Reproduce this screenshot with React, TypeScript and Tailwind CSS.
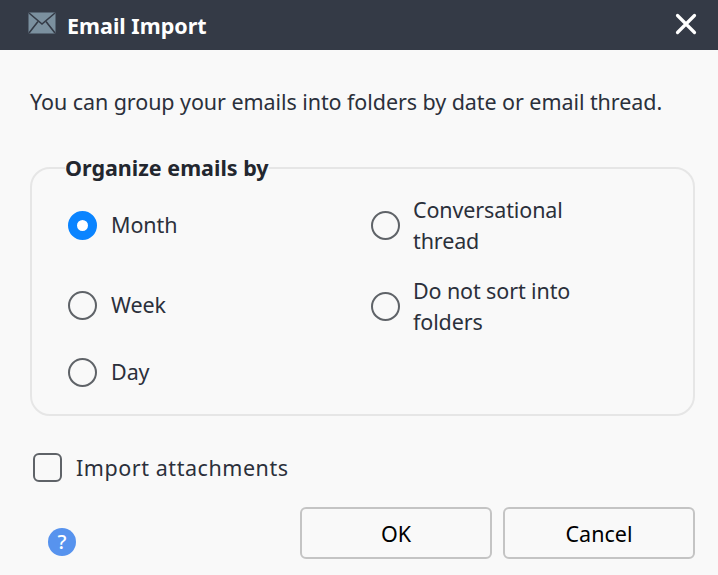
import React from "react";

function Radio({ label, checked, lift }: { label: React.ReactNode; checked?: boolean; lift?: boolean }) {
  return (
    <div className="flex items-center">
      {checked ? (
        <span className="w-[29px] h-[29px] rounded-full border-[9px] border-[#0a84ff] bg-white shrink-0" />
      ) : (
        <span className="w-[29px] h-[29px] rounded-full border-2 border-[#5f6368] shrink-0" />
      )}
      <span className={lift ? "ml-[14px] pb-[2px] text-[21.5px] tracking-[-0.07px] leading-[31px] text-[#2b303b]" : "ml-[13px] text-[21.5px] tracking-[-0.12px] leading-[31px] text-[#2b303b]"}>{label}</span>
    </div>
  );
}

export default function App() {
  return (
    <div className="w-[718px] h-[575px] bg-[#f9f9f9] flex flex-col overflow-hidden font-['Noto_Sans','Open_Sans',sans-serif]">
      <header className="h-[50px] bg-[#343a46] flex items-center pl-[28px] pr-[21px] shrink-0">
        <svg width="28" height="22" viewBox="0 0 28 22" className="-mt-[4px]">
          <rect x="0.5" y="0.5" width="27" height="21" rx="1" fill="#7b909f" />
          <path d="M1 1 L14 12 L27 1" fill="none" stroke="#343a46" strokeWidth="1.6" />
          <path d="M1 21 L10 9.5 M27 21 L18 9.5" fill="none" stroke="#343a46" strokeWidth="1.6" />
        </svg>
        <span className="ml-[11px] pt-[2px] text-[21.5px] font-bold text-white">Email Import</span>
        <svg width="22" height="22" viewBox="0 0 22 22" className="ml-auto -mt-[3px]">
          <path d="M2.5 2.5 L19.5 19.5 M19.5 2.5 L2.5 19.5" stroke="#fff" strokeWidth="3.2" strokeLinecap="round" />
        </svg>
      </header>

      <p className="mt-[36px] ml-[30px] text-[21.5px] tracking-[-0.07px] leading-[31px] text-[#2b303b] whitespace-nowrap">
        You can group your emails into folders by date or email thread.
      </p>

      <fieldset className="mt-[35px] ml-[30px] w-[665px] h-[264px] border-2 border-[#e6e6e6] rounded-[20px] pl-[36px] pr-[20px]">
        <legend className="ml-[-3px] px-0 text-[21.5px] leading-[31px] font-bold text-[#23272f]">Organize emails by</legend>
        <div className="grid grid-cols-[303px_1fr] mt-[11px]">
          <div className="flex flex-col">
            <div className="h-[62px] flex items-center"><Radio checked lift label="Month" /></div>
            <div className="h-[98px] flex items-center"><Radio lift label="Week" /></div>
            <div className="h-[36px] flex items-center"><Radio lift label="Day" /></div>
          </div>
          <div className="flex flex-col gap-[19px]">
            <Radio label={<>Conversational<br />thread</>} />
            <Radio label={<>Do not sort into<br />folders</>} />
          </div>
        </div>
      </fieldset>

      <div className="mt-[36px] ml-[33px] flex items-center">
        <span className="w-[29px] h-[29px] rounded-[6px] border-2 border-[#5f6368]" />
        <span className="ml-[14px] text-[21.5px] leading-[31px] tracking-[0.55px] text-[#2b303b]">Import attachments</span>
      </div>

      <div className="mt-[24px] flex items-start pl-[48px]">
        <span className="mt-[21px] w-[28px] h-[28px] rounded-full bg-[#5793ee] flex items-center justify-center text-white text-[20px] font-medium leading-none">?</span>
        <button className="ml-[224px] w-[192px] h-[52px] pt-[2px] border-2 border-[#c4c4c4] rounded-[6px] text-[21.5px] text-black">OK</button>
        <button className="ml-[11px] w-[192px] h-[52px] pt-[2px] border-2 border-[#c4c4c4] rounded-[6px] text-[21.5px] text-black">Cancel</button>
      </div>
    </div>
  );
}
